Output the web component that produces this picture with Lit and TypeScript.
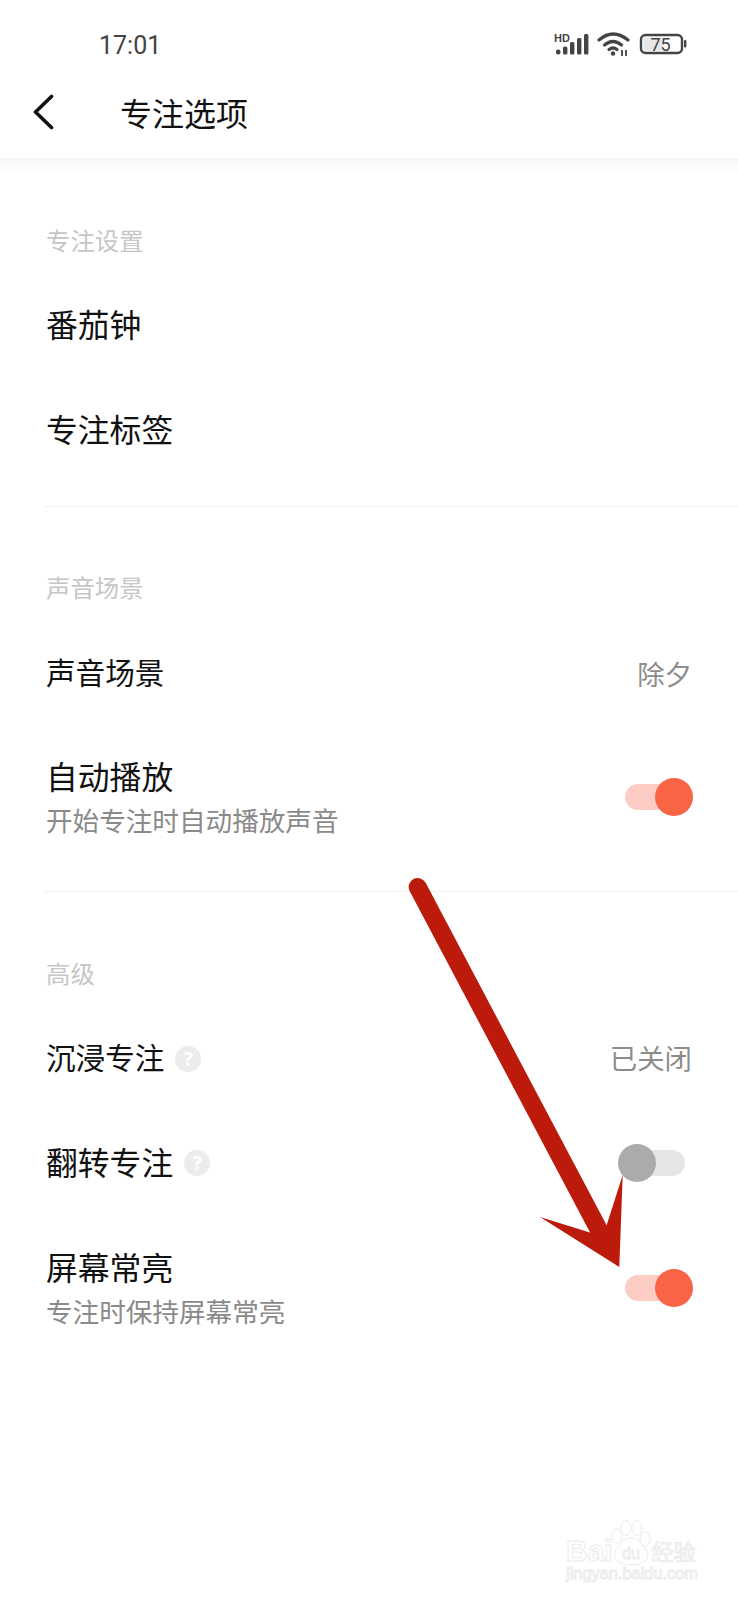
import { LitElement, html, css } from "lit";
import { customElement } from "lit/decorators.js";

const toggleOn = html`<div class="toggle on"><div class="track"></div><div class="knob"></div></div>`;
const toggleOff = html`<div class="toggle off"><div class="knob"></div><div class="track"></div></div>`;
const help = html`<span class="help">?</span>`;

@customElement("app-root")
export class AppRoot extends LitElement {
  static styles = css`
    :host {
      display: block;
      position: relative;
      width: 738px;
      height: 1600px;
      overflow: hidden;
      background: #fff;
      font-family: "Noto Sans CJK SC", "Noto Sans", sans-serif;
      color: #111;
    }
    .status {
      height: 78px;
      box-sizing: border-box;
      padding: 28px 0 0 99px;
      display: flex;
      align-items: flex-start;
      justify-content: space-between;
    }
    .time {
      font-family: Roboto, sans-serif;
      font-size: 25px;
      line-height: 32px;
      color: #444;
      margin-top: 2px;
    }
    .status-icons {
      display: block;
      margin-right: 48px;
    }
    .batt {
      font-family: Roboto, sans-serif;
      font-size: 18px;
      fill: #444;
    }
    .hd {
      font-family: "Liberation Sans", sans-serif;
      font-size: 11px;
      font-weight: 700;
      fill: #444;
    }
    .header {
      height: 70px;
      margin-bottom: 10px;
      display: flex;
      align-items: center;
      padding-left: 33px;
    }
    .back {
      display: block;
      width: 22px;
      height: 36px;
      margin-right: 65px;
      margin-top: -2px;
    }
    .title {
      font-size: 32px;
      line-height: 44px;
      margin-top: -2px;
      color: #111;
    }
    .shade {
      height: 17px;
      background: linear-gradient(#f6f6f6, #fff);
    }
    .content {
      padding-top: 45px;
    }
    .label {
      height: 40px;
      line-height: 40px;
      padding-left: 46px;
      margin-bottom: 13px;
      font-size: 24.4px;
      color: #c6c6c6;
    }
    .row {
      height: 105px;
      padding: 0 46px;
      display: flex;
      align-items: center;
      justify-content: space-between;
    }
    .row.tall {
      height: 140px;
    }
    .row.nudge {
      height: 103px;
      padding-top: 2px;
    }
    .name {
      display: flex;
      align-items: center;
      font-size: 31.8px;
      line-height: 44px;
      margin-top: -6px;
    }
    .name.small {
      font-size: 29.6px;
      margin-top: -4px;
    }
    .tall .name {
      margin-top: 0;
    }
    .sub {
      font-size: 26.6px;
      line-height: 40px;
      margin-top: 3px;
      color: #8a8a8a;
    }
    .texts {
      margin-top: 2px;
    }
    .value {
      font-size: 27.4px;
      color: #8c8c8c;
      margin-top: -2px;
    }
    .value.up {
      margin-top: -4px;
    }
    .divider {
      height: 1px;
      margin: 23px 0 60px 44px;
      background: #f0f0f0;
    }
    .divider.second {
      margin: 26px 0 61px 44px;
    }
    .help {
      width: 26px;
      height: 26px;
      border-radius: 50%;
      margin-left: 11px;
      margin-top: 4px;
      background: #ececec;
      color: #fff;
      font-size: 19px;
      font-weight: 700;
      line-height: 26px;
      text-align: center;
      font-family: "Noto Sans", sans-serif;
    }
    .toggle {
      display: flex;
      align-items: center;
      height: 38px;
    }
    .track {
      height: 26px;
      border-radius: 13px;
    }
    .knob {
      width: 38px;
      height: 38px;
      border-radius: 50%;
      position: relative;
      z-index: 1;
    }
    .on {
      margin-right: -1px;
      margin-top: 4px;
    }
    .on .track {
      width: 48px;
      background: #fdcdc5;
    }
    .on .knob {
      background: #f96445;
      margin-left: -18px;
    }
    .off {
      margin-right: 7px;
      margin-bottom: 2px;
    }
    .off .track {
      width: 49px;
      margin-left: -20px;
      background: #e6e6e6;
    }
    .off .knob {
      background: #ababae;
    }
    .arrow,
    .wm {
      position: absolute;
      left: 0;
      top: 0;
      pointer-events: none;
    }
    .wm text {
      fill: #fff;
      stroke: #ebebeb;
      stroke-width: 1px;
      font-family: "Liberation Sans", sans-serif;
    }
    .wm .cn {
      font-family: "Noto Sans CJK SC", sans-serif;
    }
  `;

  render() {
    return html`
      <div class="status">
        <div class="time">17:01</div>
        <svg class="status-icons" width="140" height="32" viewBox="550 28 140 32">
          <text class="hd" x="554" y="41.5">HD</text>
          <g fill="#444">
            <rect x="556" y="49.5" width="4.4" height="5" rx="1.8"></rect>
            <rect x="563" y="46.5" width="4.4" height="8" rx="1.5"></rect>
            <rect x="570" y="42" width="4.4" height="12.5" rx="1.5"></rect>
            <rect x="577" y="38" width="4.4" height="16.5" rx="1.5"></rect>
            <rect x="584" y="34" width="4.4" height="20.5" rx="1.5"></rect>
          </g>
          <g fill="none" stroke="#444" stroke-width="3.2" stroke-linecap="round">
            <path d="M599 40 Q613 28 628 40"></path>
            <path d="M604.5 45 Q613 38 621.5 45"></path>
            <path d="M609 49.5 Q613 46.5 617 49.5"></path>
          </g>
          <circle cx="613" cy="53.5" r="2.2" fill="#444"></circle>
          <path d="M622 50v6M626 50v6" stroke="#444" stroke-width="1.8" fill="none"></path>
          <rect x="641" y="35" width="41" height="18" rx="4.5" fill="#fff" stroke="#444" stroke-width="2.4"></rect>
          <rect x="643.5" y="37.5" width="20" height="13" fill="#e6e6e6"></rect>
          <text class="batt" x="660.5" y="50.5" text-anchor="middle">75</text>
          <rect x="684" y="40" width="2.4" height="7.5" rx="1" fill="#444"></rect>
        </svg>
      </div>
      <div class="header">
        <svg class="back" viewBox="0 0 22 36">
          <path d="M18.5 2.5 L2.5 18 L18.5 33.5" fill="none" stroke="#111" stroke-width="3.6" stroke-linecap="round" stroke-linejoin="round"></path>
        </svg>
        <div class="title">专注选项</div>
      </div>
      <div class="shade"></div>
      <div class="content">
        <div class="label">专注设置</div>
        <div class="row"><div class="name">番茄钟</div></div>
        <div class="row"><div class="name">专注标签</div></div>
        <div class="divider"></div>
        <div class="label">声音场景</div>
        <div class="row nudge"><div class="name small">声音场景</div><div class="value">除夕</div></div>
        <div class="row tall">
          <div class="texts"><div class="name">自动播放</div><div class="sub">开始专注时自动播放声音</div></div>
          ${toggleOn}
        </div>
        <div class="divider second"></div>
        <div class="label">高级</div>
        <div class="row"><div class="name small">沉浸专注${help}</div><div class="value up">已关闭</div></div>
        <div class="row"><div class="name">翻转专注${help}</div>${toggleOff}</div>
        <div class="row tall">
          <div class="texts"><div class="name">屏幕常亮</div><div class="sub">专注时保持屏幕常亮</div></div>
          ${toggleOn}
        </div>
      </div>
      <svg class="arrow" width="738" height="1600" viewBox="0 0 738 1600">
        <path d="M417.7 887 L600 1232" fill="none" stroke="#bc1b0c" stroke-width="18" stroke-linecap="round"></path>
        <path d="M540 1217 L590.7 1232.7 L606.7 1225 L622.7 1175 L619.3 1267 Z" fill="#bc1b0c"></path>
      </svg>
      <svg class="wm" width="738" height="1600" viewBox="0 0 738 1600">
        <text x="566" y="1561" font-size="30" font-weight="700">Bai</text>
        <g fill="#fff" stroke="#ebebeb" stroke-width="1">
          <ellipse cx="617" cy="1536" rx="5" ry="7"></ellipse>
          <ellipse cx="626" cy="1528" rx="5" ry="7.5"></ellipse>
          <ellipse cx="637" cy="1528" rx="5" ry="7.5"></ellipse>
          <ellipse cx="645" cy="1539" rx="5" ry="7"></ellipse>
          <path d="M631 1538 C622 1538 620 1546 616 1550 C611 1558 618 1565 631 1565 C644 1565 651 1558 646 1550 C642 1546 640 1538 631 1538 Z"></path>
        </g>
        <text x="622" y="1559" font-size="16">du</text>
        <text class="cn" x="651.5" y="1560" font-size="22">经验</text>
        <text x="566" y="1579" font-size="17" textLength="132" lengthAdjust="spacingAndGlyphs">jingyan.baidu.com</text>
      </svg>
    `;
  }
}
